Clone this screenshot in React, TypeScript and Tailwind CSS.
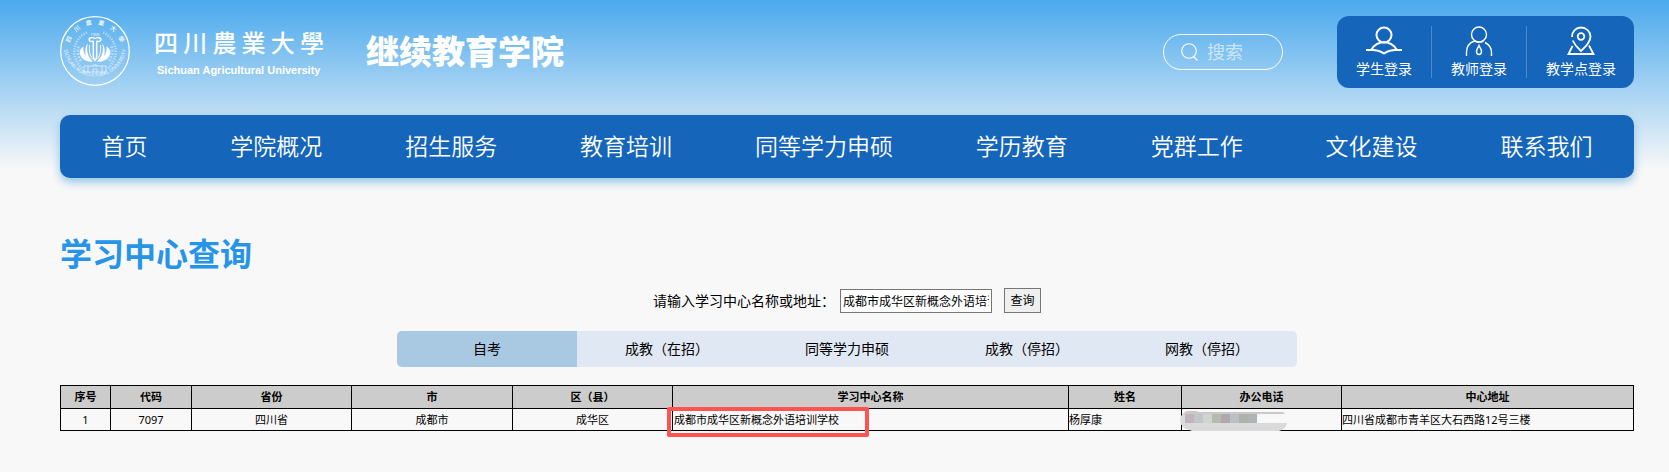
const navItems = [
  "首页",
  "学院概况",
  "招生服务",
  "教育培训",
  "同等学力申硕",
  "学历教育",
  "党群工作",
  "文化建设",
  "联系我们",
]

const tabs = ["自考", "成教（在招）", "同等学力申硕", "成教（停招）", "网教（停招）"]

const columns = [
  { name: "序号", width: "w-[50px]" },
  { name: "代码", width: "w-[81px]" },
  { name: "省份", width: "w-[160px]" },
  { name: "市", width: "w-[161px]" },
  { name: "区（县）", width: "w-[160px]" },
  { name: "学习中心名称", width: "" },
  { name: "姓名", width: "w-[113px]" },
  { name: "办公电话", width: "w-[160px]" },
  { name: "中心地址", width: "w-[292px]" },
]

const centers = [
  {
    id: 1,
    code: "7097",
    province: "四川省",
    city: "成都市",
    district: "成华区",
    name: "成都市成华区新概念外语培训学校",
    contact: "杨厚康",
    address: "四川省成都市青羊区大石西路12号三楼",
  },
]

function Seal() {
  return (
    <svg viewBox="0 0 70 70" className="size-[70px] shrink-0" fill="none" stroke="white" aria-hidden="true">
      <defs>
        <path id="seal-top" d="M8.500 35a26.500 26.500 0 0 1 53 0" />
        <path id="seal-bottom" d="M3.500 29a31.500 31.500 0 1 0 63 0" />
      </defs>
      <circle cx="35" cy="35" r="34.300" strokeWidth="1.200" />
      <path d="M22 52A21 21 0 0 1 28 16M48 52A21 21 0 0 0 42 16" strokeWidth="2.600" strokeDasharray="1.300 1.300" opacity="0.450" />
      <path d="M21 45A17 17 0 0 1 19 29M49 45A17 17 0 0 0 51 29" strokeWidth="3" strokeDasharray="2 1.300" opacity="0.400" />
      <text fill="white" stroke="none" fontSize="6" fontWeight="500">
        <textPath href="#seal-top" startOffset="50%" textAnchor="middle">四　川　農　業　大　學</textPath>
      </text>
      <text x="35" y="20" fill="white" stroke="none" fontSize="4" textAnchor="middle" opacity="0.900">
        1906
      </text>
      <text fill="white" stroke="none" fontSize="5" opacity="0.850">
        <textPath href="#seal-bottom" startOffset="50%" textAnchor="middle">SICHUAN AGRICULTURAL UNIVERSITY</textPath>
      </text>
      {/* Wheat and book emblem */}
      <path d="M33.500 25c-2 1-4.500 .5-4.500-1.500s3.500-2.500 6-1c2.500-1.500 6-1 6 1s-2.500 2.500-4.500 1.500" strokeWidth="1.400" />
      <path d="M33.300 25v15c0 2 .7 3.500 1.700 4.500c1-1 1.700-2.500 1.700-4.500V25" strokeWidth="1.500" />
      <path d="M28 27c-2 6-1 13 5 18.500c-8 1-13-4-13.300-9c0-2.500 1.300-4.500 3.800-6c-.5 4 .5 7 2.500 9.500c-1.500-5-.8-9.500 2-13z" fill="white" stroke="none" />
      <path d="M42 27c2 6 1 13-5 18.500c8 1 13-4 13.300-9c0-2.500-1.300-4.500-3.800-6c.5 4-.5 7-2.500 9.500c1.500-5 .8-9.500-2-13z" fill="white" stroke="none" />
      <path d="M29.500 29c-.5 5 0 10 3 14M40.500 29c.5 5 0 10-3 14" strokeWidth="1" />
      <path d="M24 50h22M24 56h22M24 50v6M28 50v6M42 50v6M46 50v6M32 50l3-1.500l3 1.500M33 56v-3h4v3" strokeWidth="0.800" opacity="0.700" />
    </svg>
  )
}

function StudentIcon() {
  return (
    <svg viewBox="0 0 36 30" className="h-[30px] w-9 shrink-0" fill="none" stroke="white" strokeWidth="2" aria-hidden="true">
      <circle cx="18" cy="9" r="7.500" />
      <path d="M5.500 23.500C8.500 18.500 13 16.300 18 16.300s9.500 2.200 12.500 7.200" />
      <path d="M0 24h7c4.500 0 8 1.500 11 3.500c3-2 6.500-3.500 11-3.500h7" />
    </svg>
  )
}

function TeacherIcon() {
  return (
    <svg viewBox="0 0 36 30" className="h-[30px] w-9 shrink-0" fill="none" stroke="white" strokeWidth="1.400" aria-hidden="true">
      <circle cx="18" cy="8.500" r="7.500" />
      <path d="M5.500 30v-3.500c0-6 3.500-10 8-11.500c3 1.500 6 1.500 9 0M24 16.500c4 2 6.500 5.500 6.500 10V30" />
      <path d="M18 19.500c-1 2.500-2.500 4-2.500 6s1 3 2.500 3s2.500-1 2.500-3s-1.500-3.500-2.500-6z" />
    </svg>
  )
}

function SiteIcon() {
  return (
    <svg viewBox="0 0 36 30" className="h-[30px] w-9 shrink-0" fill="none" stroke="white" strokeWidth="1.800" aria-hidden="true">
      <path d="M9 11C9 5.500 13 1.500 18 1.500s9.500 4 9.500 9c0 5.500-5 10.500-9.500 14.500c-3.500-3-6.500-6.500-8.300-10.500" />
      <circle cx="18" cy="10.500" r="3.300" />
      <path d="M9.500 20L5.500 28h25l-4.500-8.500" />
    </svg>
  )
}

const logins = [
  { name: "学生登录", icon: StudentIcon },
  { name: "教师登录", icon: TeacherIcon },
  { name: "教学点登录", icon: SiteIcon },
]

// Phone number hidden behind a pixelated smudge
function MaskedPhone() {
  return (
    <svg viewBox="0 0 107 20" className="absolute -left-0.5 top-0.5 h-5 w-[107px]" role="img" aria-label="办公电话">
      <path d="M8 0h8l2 1h82q4 0 5 2H77v9h30q-1 6-8 8H12Q0 17 0 9.500T8 0z" fill="#dadada" />
      <path d="M8 0h8l2 1h82q4 0 5 2H3Q5 0 8 0z" fill="#c9c9c9" />
      <path d="M5 3h9v9H5z" fill="#c1b5ba" />
      <path d="M14 3h9v9h-9z" fill="#c1c5cc" />
      <path d="M23 3h9v9h-9z" fill="#d2d4d1" />
      <path d="M32 3h9v9h-9z" fill="#b8bab2" />
      <path d="M41 3h9v9h-9z" fill="#afa9ae" />
      <path d="M50 3h9v9h-9z" fill="#bebfc4" />
      <path d="M59 3h9v9h-9z" fill="#afb1ac" />
      <path d="M68 3h9v9h-9z" fill="#adb3b6" />
    </svg>
  )
}

export default function App() {
  return (
    <div className="min-h-screen bg-[#f8f8f8] bg-[linear-gradient(#4aa9ed,#f8f8f8_170px)] bg-no-repeat pr-[35px] pl-[60px] font-['Noto_Sans','Noto_Sans_CJK_SC',sans-serif] text-black">
      {/* Header */}
      <header className="flex items-start justify-between pt-4">
        <a href="#" className="flex items-start text-white">
          <Seal />
          <div className="ml-6 w-[170px] pt-2">
            <div className="flex justify-between text-2xl leading-[38px] font-medium">
              <span>四</span>
              <span>川</span>
              <span>農</span>
              <span>業</span>
              <span>大</span>
              <span>學</span>
            </div>
            <div className="pl-[3px] font-['Liberation_Sans',sans-serif] text-[11px] leading-4 font-bold whitespace-nowrap">
              Sichuan Agricultural University
            </div>
          </div>
          <div className="ml-[42px] pt-4 text-[33px] leading-10 font-black">继续教育学院</div>
        </a>

        <div className="flex items-start">
          <form className="mt-[18px] flex h-9 w-[120px] items-center rounded-full border border-white pl-[17px]">
            <svg viewBox="0 0 18 18" className="size-[18px] shrink-0" fill="none" stroke="white" strokeWidth="1.100" aria-hidden="true">
              <circle cx="8" cy="8" r="7.300" />
              <path d="M12.500 13.500l4 4" />
            </svg>
            <input
              type="text"
              aria-label="搜索"
              placeholder="搜索"
              className="ml-2 w-14 bg-transparent text-lg text-white outline-none placeholder:text-[#cbe6fa]"
            />
          </form>

          <div className="ml-[54px] flex rounded-xl bg-[#1565bb] py-2.5 text-white">
            {logins.map(({ name, icon: Icon }) => (
              <a
                key={name}
                href="#"
                className="flex h-[52px] flex-col items-center border-r border-[#4a8ad0] px-[19px] text-sm leading-[26px] last:border-r-0 last:pr-[18px]"
              >
                <Icon />
                {name}
              </a>
            ))}
          </div>
        </div>
      </header>

      {/* Navigation */}
      <nav className="mt-[27px] flex h-[63px] items-center justify-around rounded-[10px] bg-[#1565bb] text-[23px] font-[350] text-white shadow-[0_4px_10px_#8fc4e4]">
        {navItems.map((item) => (
          <a key={item} href="#">
            {item}
          </a>
        ))}
      </nav>

      {/* Query */}
      <main className="pt-[52px]">
        <h1 className="text-[32px] leading-[48px] font-bold text-[#2694e8]">学习中心查询</h1>

        <form className="mt-2.5 flex items-end justify-center">
          <label htmlFor="keyword" className="w-[187px] text-sm leading-6">
            请输入学习中心名称或地址：
          </label>
          <input
            id="keyword"
            type="text"
            defaultValue="成都市成华区新概念外语培训学校"
            className="h-6 w-[152px] border border-[#767676] bg-white px-0.5 text-xs"
          />
          <button type="button" className="ml-3 h-[25px] w-[37px] border border-[#767676] bg-[#efefef] text-xs">
            查询
          </button>
        </form>

        <div className="mx-auto mt-[18px] grid max-w-[900px] grid-cols-5 overflow-hidden rounded-[5px] bg-[#e0e8f3]">
          {tabs.map((tab, index) => (
            <button key={tab} type="button" className={index === 0 ? "h-9 bg-[#a9c8e1] text-sm" : "h-9 text-sm"}>
              {tab}
            </button>
          ))}
        </div>

        <table className="mt-[18px] w-full table-fixed border-collapse text-[11px] leading-[22px]">
          <thead>
            <tr className="bg-[#cccccc]">
              {columns.map((column) => (
                <th key={column.name} className={`border border-black font-bold ${column.width}`}>
                  {column.name}
                </th>
              ))}
            </tr>
          </thead>
          <tbody>
            {centers.map((center) => (
              <tr key={center.id} className="text-center leading-[21px]">
                <td className="border border-black">{center.id}</td>
                <td className="border border-black">{center.code}</td>
                <td className="border border-black">{center.province}</td>
                <td className="border border-black">{center.city}</td>
                <td className="border border-black">{center.district}</td>
                <td className="relative border border-black pl-px text-left">
                  {center.name}
                  <div className="absolute -top-0.5 -left-1.5 h-[30px] w-[202px] rounded-xs border-4 border-[#fd5453]"></div>
                </td>
                <td className="border border-black text-left">{center.contact}</td>
                <td className="relative border border-black">
                  <MaskedPhone />
                </td>
                <td className="border border-black text-left">{center.address}</td>
              </tr>
            ))}
          </tbody>
        </table>
      </main>
    </div>
  )
}
